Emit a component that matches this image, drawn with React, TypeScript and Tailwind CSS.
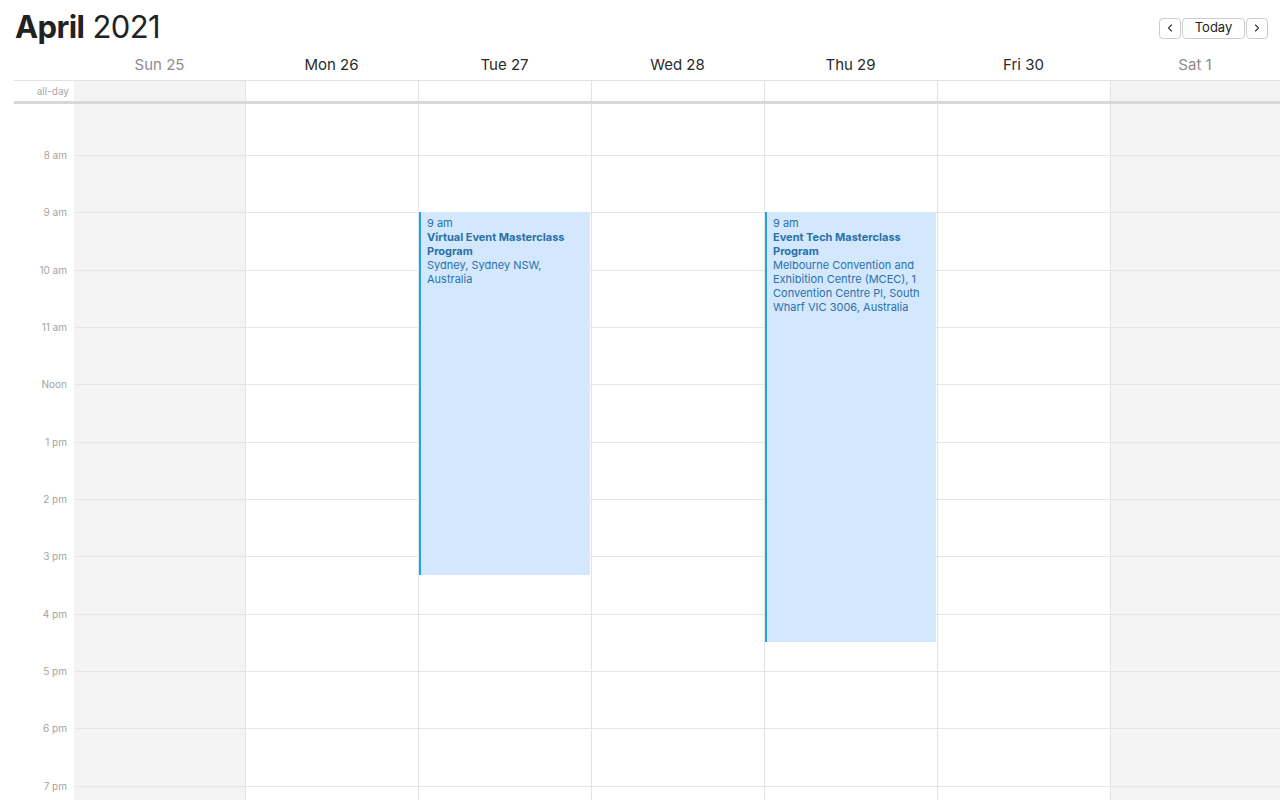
import { ChevronLeft, ChevronRight } from "lucide-react";

const days = [
  { label: "Sun 25", weekend: true },
  { label: "Mon 26", weekend: false },
  { label: "Tue 27", weekend: false },
  { label: "Wed 28", weekend: false },
  { label: "Thu 29", weekend: false },
  { label: "Fri 30", weekend: false },
  { label: "Sat 1", weekend: true },
];

const hours = ["8 am", "9 am", "10 am", "11 am", "Noon", "1 pm", "2 pm", "3 pm", "4 pm", "5 pm", "6 pm", "7 pm"];

const HOUR = 57.33;
const FIRST = 51;

type Ev = { day: number; start: number; end: number; title: string; place: string };

const events: Ev[] = [
  {
    day: 2,
    start: 9,
    end: 15 + 1 / 3,
    title: "Virtual Event Masterclass Program",
    place: "Sydney, Sydney NSW, Australia",
  },
  {
    day: 4,
    start: 9,
    end: 16.5,
    title: "Event Tech Masterclass Program",
    place: "Melbourne Convention and Exhibition Centre (MCEC), 1 Convention Centre Pl, South Wharf VIC 3006, Australia",
  },
];

const cols = "grid grid-cols-[171px_repeat(5,173px)_1fr]";

function EventBlock({ ev }: { ev: Ev }) {
  const top = FIRST + (ev.start - 8) * HOUR;
  const height = (ev.end - ev.start) * HOUR;
  return (
    <div
      className="absolute left-0 right-px bg-[#d3e8fd] border-l-2 border-[#1fa2f0] pl-[6px] pr-1 pt-[4px] text-[11px] leading-[14px] text-[#2a70aa]"
      style={{ top, height }}
    >
      <div>9 am</div>
      <div className="font-bold">{ev.title}</div>
      <div>{ev.place}</div>
    </div>
  );
}

export default function App() {
  return (
    <div className="w-[1280px] h-[800px] overflow-hidden bg-white font-['Inter',sans-serif] text-[#222]">
      <header className="h-[50px] flex items-center justify-between pl-[15px] pr-[12px] pt-[4px]">
        <h1 className="text-[31px] tracking-[-0.6px] text-[#222]">
          <span className="font-bold">April</span> 2021
        </h1>
        <div className="flex gap-px items-center pt-[2px]">
          <button className="w-[22px] h-[21px] flex items-center justify-center rounded-[4px] border border-[#cdcdcd] bg-white">
            <ChevronLeft size={12} strokeWidth={2.2} color="#333" />
          </button>
          <button className="w-[63px] h-[21px] flex items-center justify-center rounded-[4px] border border-[#cdcdcd] bg-white text-[13px] text-[#222]">
            Today
          </button>
          <button className="w-[22px] h-[21px] flex items-center justify-center rounded-[4px] border border-[#cdcdcd] bg-white">
            <ChevronRight size={12} strokeWidth={2.2} color="#333" />
          </button>
        </div>
      </header>

      <div className="ml-[14px]">
        <div className="flex h-[31px] border-b border-[#e3e3e3]">
          <div className="w-[60px]" />
          <div className={`flex-1 ${cols}`}>
            {days.map((d) => (
              <div
                key={d.label}
                className={`flex items-center justify-center text-[15px] pt-[1px] ${d.weekend ? "text-[#8d8d8d]" : "text-[#2a2a2a]"}`}
              >
                {d.label}
              </div>
            ))}
          </div>
        </div>

        <div className="flex h-[23px] border-b-[3px] border-[#d8d8d8]">
          <div className="w-[60px] flex items-center justify-end pr-[5px] text-[10px] text-[#a8a8a8]">all-day</div>
          <div className={`flex-1 ${cols}`}>
            {days.map((d, i) => (
              <div
                key={d.label}
                className={`${i > 0 ? "border-l border-[#e3e3e3]" : ""} ${d.weekend ? "bg-[#f4f4f4]" : "bg-white"}`}
              />
            ))}
          </div>
        </div>

        <div className="flex">
          <div className="w-[60px] flex flex-col">
            <div className="h-[51px]" />
            {hours.map((h) => (
              <div key={h} className="h-[57.33px] relative">
                <span className="absolute right-[7px] -top-[7px] text-[10px] leading-[14px] text-[#a3a3a3]">{h}</span>
              </div>
            ))}
          </div>
          <div className={`flex-1 ${cols}`}>
            {days.map((d, i) => (
              <div
                key={d.label}
                className={`relative flex flex-col ${i > 0 ? "border-l border-[#e3e3e3]" : ""} ${d.weekend ? "bg-[#f4f4f4]" : "bg-white"}`}
              >
                <div className="h-[51px]" />
                {hours.map((h) => (
                  <div key={h} className="h-[57.33px] border-t border-[#e6e6e6]" />
                ))}
                {events
                  .filter((e) => e.day === i)
                  .map((e) => (
                    <EventBlock key={e.title} ev={e} />
                  ))}
              </div>
            ))}
          </div>
        </div>
      </div>
    </div>
  );
}
